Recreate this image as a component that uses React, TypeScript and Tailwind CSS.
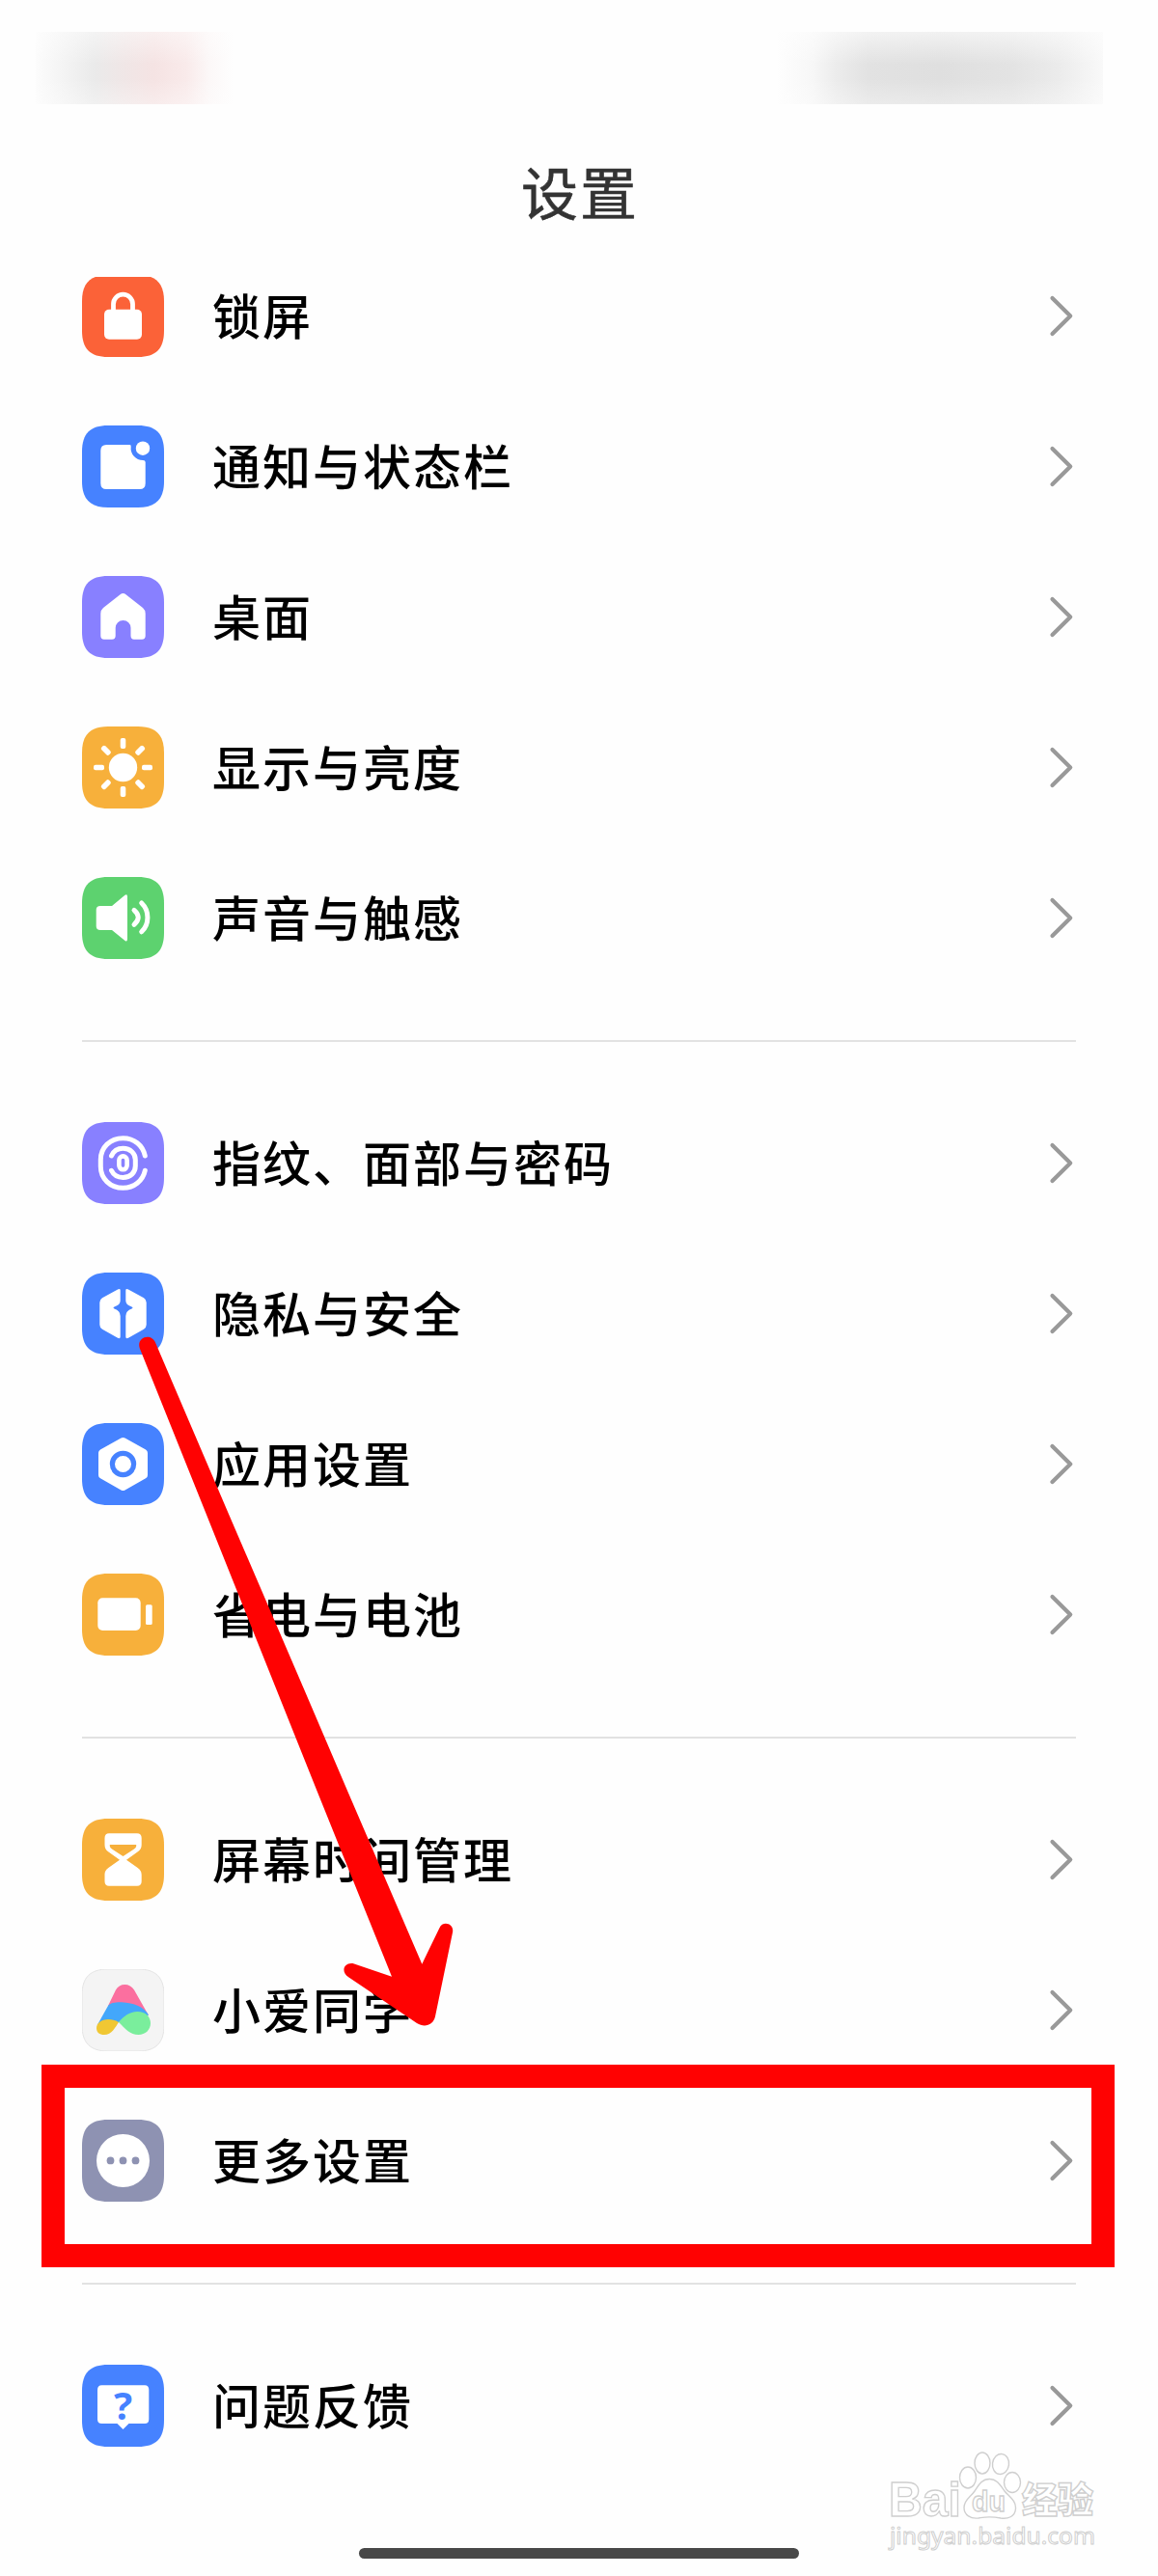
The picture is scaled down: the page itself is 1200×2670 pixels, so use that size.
import type { ReactNode } from "react";

const SQUIRCLE =
    "M0 27C0 8.5 8.5 0 27 0H58C76.500 0 85 8.500 85 27V58C85 76.500 76.500 85 58 85H27C8.500 85 0 76.500 0 58Z";

function Tile({ color, border, children }: { color: string; border?: string; children: ReactNode }) {
    return (
        <svg viewBox="0 0 85 85" className="block h-[85px] w-[85px] shrink-0" fill="#fff">
            <path d={SQUIRCLE} fill={color} stroke={border || "none"} />
            {children}
        </svg>
    );
}

const LockIcon = () => (
    <Tile color="#fb6238">
        <rect x="23" y="35.700" width="39" height="31" rx="5" />
        <path d="M32.500 38V30.200a10 10 0 0 1 20 0V38" fill="none" stroke="#fff" strokeWidth="4.800" />
    </Tile>
);

const NotificationIcon = () => (
    <Tile color="#4682ff">
        <path d="M25.300 20H49.500Q51 20 50.700 22A12.400 12.400 0 0 0 63 36Q65.700 36 65.700 38V60Q65.700 66 59.700 66H25.300Q19.300 66 19.300 60V26Q19.300 20 25.300 20Z" />
        <circle cx="63" cy="23.700" r="7.200" />
    </Tile>
);

const HomeIcon = () => (
    <Tile color="#8880ff">
        <path d="M39.500 19.200Q42.500 16.800 45.500 19.200L63 33Q65.700 35.300 65.700 39V62Q65.700 65.700 62 65.700H54Q50.500 65.700 50.500 62V53.800A7.900 7.900 0 0 0 34.700 53.800V62Q34.700 65.700 31 65.700H23Q19.300 65.700 19.300 62V39Q19.300 35.300 22 33Z" />
    </Tile>
);

const SunIcon = () => (
    <Tile color="#f7b03b">
        <circle cx="42.500" cy="42.500" r="14.700" />
        {[0, 45, 90, 135, 180, 225, 270, 315].map((deg) => (
            <rect key={deg} x="39.700" y="12" width="5.600" height="11" rx="2" transform={`rotate(${deg} 42.5 42.5)`} />
        ))}
    </Tile>
);

const SoundIcon = () => (
    <Tile color="#5dd26f">
        <path d="M19 30H31L44.500 18.700Q47 17 47 20.500V64Q47 67.700 44.500 66L31 55H19Q14.700 55 14.700 51V34Q14.700 30 19 30Z" />
        <path
            d="M54 34.300Q62.500 41.800 54 49.300M61.700 27C70 35 70 49 61.700 56.800"
            fill="none"
            stroke="#fff"
            strokeWidth="5"
            strokeLinecap="round"
        />
    </Tile>
);

const FingerprintIcon = () => (
    <Tile color="#8880ff">
        <g fill="none" stroke="#fff" strokeWidth="5" strokeLinecap="round">
            <path d="M65.300 35C63 24 54 16.700 42.500 16.700C29 16.700 19.300 26.500 19.300 39V46C19.300 58.500 29 68.300 42.500 68.300C54 68.300 63 61 65.300 50.300" />
            <path d="M30.500 35C32.500 30.500 37 27.300 42.500 27.300C50 27.300 55.300 32.500 55.300 39V45.500C55.300 52.500 50 57.500 42.500 57.500C37 57.500 32.500 54.500 30.500 50.300" />
            <rect x="38.400" y="35.400" width="8.200" height="13.800" rx="4.100" strokeWidth="4.600" />
        </g>
    </Tile>
);

const PrivacyIcon = () => (
    <Tile color="#4682ff">
        <path d="M37 17.500Q39.700 16.200 39.700 18.500V29Q39.700 33.500 33.500 35.500Q31.500 36.500 33.500 37.500Q39.700 39.500 39.700 45V66.500Q39.700 69 37 67.800L21 58.800Q18.300 57 18.300 54V31Q18.300 28 21 26.300Z" />
        <path d="M48 17.500Q45.300 16.200 45.300 18.500V29Q45.300 33.500 51.500 35.500Q53.500 36.500 51.500 37.500Q45.300 39.500 45.300 45V66.500Q45.300 69 48 67.800L64 58.800Q66.700 57 66.700 54V31Q66.700 28 64 26.300Z" />
    </Tile>
);

const AppSettingsIcon = () => (
    <Tile color="#4682ff">
        <path d="M40.500 15.500Q42.500 14.300 44.500 15.500L66 27.500Q68 28.800 68 31V54Q68 56.200 66 57.300L44.500 69.500Q42.500 70.700 40.500 69.500L19 57.300Q17 56.200 17 54V31Q17 28.800 19 27.500Z" />
        <circle cx="42.500" cy="42.500" r="11.100" fill="none" stroke="#4682ff" strokeWidth="5.200" />
    </Tile>
);

const BatteryIcon = () => (
    <Tile color="#f7b03b">
        <rect x="16.300" y="25.300" width="44.400" height="33.700" rx="5" />
        <rect x="66" y="32.300" width="6.700" height="20.700" rx="1.500" />
    </Tile>
);

const HourglassIcon = () => (
    <Tile color="#f7b03b">
        <path
            fillRule="evenodd"
            d="M28 15.300H57Q61.700 15.300 61.700 20V27C61.700 30.500 60.500 32.500 57.500 34.500L46 42.700L57 50.500C60.500 53 61.700 55 61.700 58.500V65Q61.700 69.700 57 69.700H28Q23.500 69.700 23.500 65V58.500C23.500 55 24.500 53 28 50.500L39 42.700L27.500 34.500C24.500 32.500 23.500 30.500 23.500 27V20Q23.500 15.300 28 15.300ZM28.800 27V28.500Q28.800 30 31 31.500L42.500 39L54 31.500Q56.200 30 56.200 28.500V27Z"
        />
    </Tile>
);

const XiaoAiIcon = () => (
    <Tile color="#f4f4f4" border="#e4e4e4">
        <path d="M27 38L35 21.500C38.500 14 50 14 54 21.500L69 48L50 44Z" fill="#fb6f9f" />
        <path d="M15.800 58L27 38C29 34.500 36 34 41 34.200C54 35 64 39 69 47.500L56 52L38 55Z" fill="#43a7fb" />
        <path d="M38 55C43 49 49 44 57.500 44C66 44 71 49.500 71 56C71 63 65.500 68 58.500 68C50 68 45 62 38 55Z" fill="#7aee9c" />
        <path d="M15 61C15 54 26 48.500 38 55C34.500 60 31 68 23 68C18 68 15 65.500 15 61Z" fill="#f0c733" />
    </Tile>
);

const MoreIcon = () => (
    <Tile color="#8e92b2">
        <circle cx="42.500" cy="42.500" r="27.500" />
        <g fill="#8e92b2">
            <circle cx="29.500" cy="42.400" r="3.900" />
            <circle cx="42.500" cy="42.400" r="3.900" />
            <circle cx="55.500" cy="42.400" r="3.900" />
        </g>
    </Tile>
);

const FeedbackIcon = () => (
    <Tile color="#4682ff">
        <path d="M20.500 21.300H65Q69.300 21.300 69.300 26V56.500Q69.300 61 65 61H48.500L42.500 67L36.500 61H20.500Q16 61 16 56.500V26Q16 21.300 20.500 21.300Z" />
        <text x="42.500" y="56.500" textAnchor="middle" fill="#4682ff" className="font-['Noto_Sans',sans-serif] text-[40px] font-bold">
            ?
        </text>
    </Tile>
);

const groups = [
    [
        { label: "锁屏", Icon: LockIcon },
        { label: "通知与状态栏", Icon: NotificationIcon },
        { label: "桌面", Icon: HomeIcon },
        { label: "显示与亮度", Icon: SunIcon },
        { label: "声音与触感", Icon: SoundIcon },
    ],
    [
        { label: "指纹、面部与密码", Icon: FingerprintIcon },
        { label: "隐私与安全", Icon: PrivacyIcon },
        { label: "应用设置", Icon: AppSettingsIcon },
        { label: "省电与电池", Icon: BatteryIcon },
    ],
    [
        { label: "屏幕时间管理", Icon: HourglassIcon },
        { label: "小爱同学", Icon: XiaoAiIcon },
        { label: "更多设置", Icon: MoreIcon },
    ],
    [{ label: "问题反馈", Icon: FeedbackIcon }],
];

function Watermark() {
    return (
        <svg
            viewBox="0 0 230 115"
            className="absolute top-[2535px] left-[915px] h-[115px] w-[230px] font-['Liberation_Sans','Noto_Sans_CJK_SC',sans-serif]"
            fill="#fff"
            stroke="#cfcfcf"
            strokeWidth="1.400"
        >
            <text x="6" y="73" textLength="75" lengthAdjust="spacingAndGlyphs" className="text-[50px] font-bold">Bai</text>
            <ellipse cx="88" cy="33" rx="8.500" ry="11" />
            <ellipse cx="103" cy="18" rx="8" ry="11" />
            <ellipse cx="122" cy="19" rx="8.500" ry="10.500" transform="rotate(8 122 19)" />
            <ellipse cx="134" cy="38" rx="8.500" ry="10.500" />
            <path d="M110.500 34.500C119 34.500 122 42 126 47C131 53 138 57 137.500 65C137 74 129 76 122 75C114 73.500 107 73.500 99 75C91 76 84 72 84 64C84 56 91 53 95 47C99 41 102 34.500 110.500 34.500Z" />
            <text x="92" y="68" textLength="35" lengthAdjust="spacingAndGlyphs" className="text-[30px] font-bold">du</text>
            <text x="144" y="70" textLength="74" lengthAdjust="spacingAndGlyphs" className="text-[37px] font-black">经验</text>
            <text x="7" y="102" textLength="213" lengthAdjust="spacingAndGlyphs" className="font-['Noto_Sans',sans-serif] text-[24px]" strokeWidth="1">
                jingyan.baidu.com
            </text>
        </svg>
    );
}

export default function App() {
    return (
        <div className="relative flex h-[2670px] w-[1200px] flex-col overflow-hidden bg-[#fefefe] font-['Noto_Sans_CJK_SC',sans-serif]">
            {/* status bar, contents blurred out */}
            <div className="flex justify-between pt-[33px] pr-[57px] pl-[37px]">
                <div className="h-[75px] w-[205px] bg-[linear-gradient(90deg,#fcfcfc_0%,#f3f3f3_15%,#eaeaea_30%,#f0e6e6_45%,#f5e3e3_60%,#f9eaea_76%,#fcf8f8_88%,#fefefe_100%)]">
                    <div className="h-full w-full bg-[linear-gradient(180deg,#fefefe77_0%,transparent_45%,transparent_65%,#fefefe55_100%)]" />
                </div>
                <div className="h-[75px] w-[338px] bg-[linear-gradient(90deg,#fefefe_0%,#f7f7f7_11%,#ececec_18%,#e2e2e2_28%,#dfdfdf_50%,#e3e3e3_72%,#ebebeb_86%,#f9f9f9_100%)]">
                    <div className="h-full w-full bg-[linear-gradient(180deg,#fefefe99_0%,transparent_45%,transparent_65%,#fefefe55_100%)]" />
                </div>
            </div>

            <h1 className="mt-[50px] h-[80px] pl-[2px] text-center text-[59px] leading-[80px] tracking-[2px] text-[#333] [-webkit-text-stroke:0.600px_#333]">设置</h1>

            {/* list is scrolled a little, so the first icon is cut by the header */}
            <main className="mt-[49px] h-[2300px] overflow-hidden px-[85px]">
                <div className="-mt-[38px]">
                    {groups.map((rows, index) => (
                        <section key={index}>
                            {index > 0 && <div className="mt-[49px] mb-[47px] h-[2px] w-[1030px] bg-[#e2e2e2]" />}
                            {rows.map(({ label, Icon }) => (
                                <div key={label} className="flex h-[156px] items-start pt-[36px]">
                                    <Icon />
                                    <span className="ml-[50px] flex-1 text-[50px] leading-[81px] font-medium tracking-[2px] text-black">{label}</span>
                                    <svg viewBox="0 0 26 43" className="mt-[21px] mr-[2px] h-[43px] w-[26px]" fill="none">
                                        <path d="M3.500 3L22.200 21.500L3.500 40" stroke="#999" strokeWidth="4.200" strokeLinecap="round" strokeLinejoin="round" />
                                    </svg>
                                </div>
                            ))}
                        </section>
                    ))}
                </div>
            </main>

            {/* home indicator */}
            <div className="absolute top-[2641px] left-[372px] h-[11px] w-[456px] rounded-full bg-[#484848]" />

            {/* highlight box and arrow */}
            <div className="absolute top-[2140px] left-[43px] h-[210px] w-[1112px] border-[24px] border-[#ff0202]" />
            <svg viewBox="0 0 1200 2670" className="pointer-events-none absolute top-0 left-0 h-[2670px] w-[1200px]" fill="#ff0202">
                <path d="M144.800 1397.500C141 1386 156.500 1381 161 1391.500L237.300 1570L314.700 1750L361.700 1860L437.300 2035.700L455.300 1998.500C459 1990 471 1994 469 2003L451 2090C449 2099 440 2102 432 2097L361.500 2049.500C352 2043.500 357 2033 367 2035.500L406 2048.700L330 1860L286 1750L214 1570Z" />
            </svg>

            <Watermark />
        </div>
    );
}
